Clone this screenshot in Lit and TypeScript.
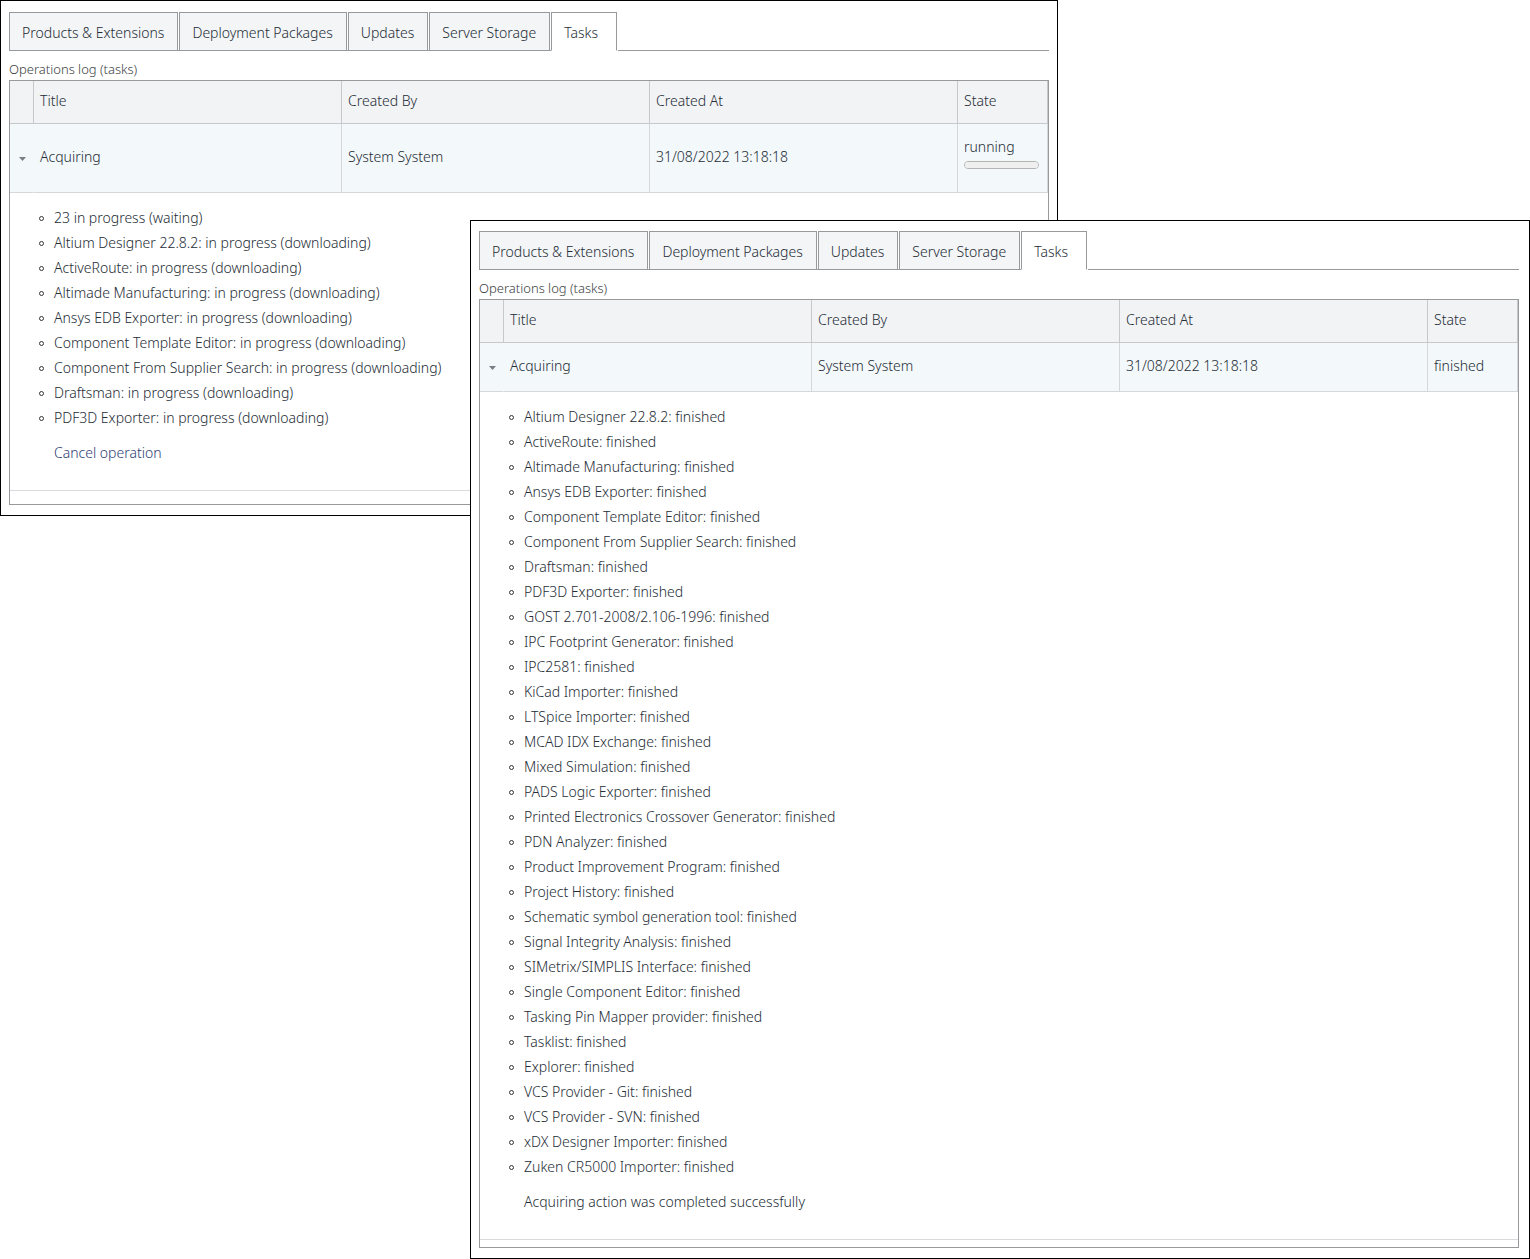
import { LitElement, html, css } from "lit";
import { customElement, property } from "lit/decorators.js";
import { classMap } from "lit/directives/class-map.js";

interface Task {
  title: string;
  createdBy: string;
  createdAt: string;
  state: string;
  items: string[];
  message?: string;
  action?: string;
}

const TABS = ["Products & Extensions", "Deployment Packages", "Updates", "Server Storage", "Tasks"];

const PRODUCTS = [
  "Altium Designer 22.8.2",
  "ActiveRoute",
  "Altimade Manufacturing",
  "Ansys EDB Exporter",
  "Component Template Editor",
  "Component From Supplier Search",
  "Draftsman",
  "PDF3D Exporter",
];

const EXTRA_PRODUCTS = [
  "GOST 2.701-2008/2.106-1996",
  "IPC Footprint Generator",
  "IPC2581",
  "KiCad Importer",
  "LTSpice Importer",
  "MCAD IDX Exchange",
  "Mixed Simulation",
  "PADS Logic Exporter",
  "Printed Electronics Crossover Generator",
  "PDN Analyzer",
  "Product Improvement Program",
  "Project History",
  "Schematic symbol generation tool",
  "Signal Integrity Analysis",
  "SIMetrix/SIMPLIS Interface",
  "Single Component Editor",
  "Tasking Pin Mapper provider",
  "Tasklist",
  "Explorer",
  "VCS Provider - Git",
  "VCS Provider - SVN",
  "xDX Designer Importer",
  "Zuken CR5000 Importer",
];

const RUNNING: Task = {
  title: "Acquiring",
  createdBy: "System System",
  createdAt: "31/08/2022 13:18:18",
  state: "running",
  items: ["23 in progress (waiting)", ...PRODUCTS.map((p) => `${p}: in progress (downloading)`)],
  action: "Cancel operation",
};

const FINISHED: Task = {
  title: "Acquiring",
  createdBy: "System System",
  createdAt: "31/08/2022 13:18:18",
  state: "finished",
  items: [...PRODUCTS, ...EXTRA_PRODUCTS].map((p) => `${p}: finished`),
  message: "Acquiring action was completed successfully",
};

@customElement("task-panel")
export class TaskPanel extends LitElement {
  @property({ attribute: false }) task!: Task;

  static styles = css`
    :host {
      display: block;
      box-sizing: border-box;
      border: 1px solid #000;
      background: #fff;
      color: #242c35;
      font: 300 14px/25px "Noto Sans", "Open Sans", sans-serif;
    }
    .tabs {
      display: flex;
      gap: 1px;
      background: linear-gradient(#97999d, #97999d) bottom / 100% 1px no-repeat;
    }
    .tab {
      box-sizing: border-box;
      height: 39px;
      padding: 2px 13px 0 12px;
      border: 1px solid #97999d;
      background: #f3f5f7;
      color: inherit;
      font: inherit;
      white-space: nowrap;
      cursor: pointer;
    }
    .tab.active {
      padding-right: 18px;
      border-bottom-color: #fff;
      background: #fff;
      box-shadow: 1px 0 #fff;
    }
    .heading {
      margin: 0;
      padding-top: 8px;
      color: #3c3e42;
      font: 300 13px/21px "Noto Sans", "Open Sans", sans-serif;
    }
    .box {
      border: 1px solid #97999d;
      padding-bottom: 13px;
    }
    .box.finished {
      padding-bottom: 7px;
    }
    .grid {
      width: 100%;
      table-layout: fixed;
      border-collapse: separate;
      border-spacing: 0;
    }
    .col-toggle {
      width: 24px;
    }
    .col-state {
      width: 90px;
    }
    .head,
    .cell {
      box-sizing: border-box;
      padding: 10px 6px 13px;
      border-right: 1px solid #d5d7da;
      border-bottom: 1px solid #d5d7da;
      background: #f3f8fb;
      font-weight: inherit;
      text-align: left;
      vertical-align: middle;
    }
    .head {
      padding: 7px 6px 10px;
      border-color: #c6c8cc;
      background: #f2f3f5;
    }
    .cell.toggle {
      padding: 0;
      border-right-color: transparent;
    }
    .caret {
      display: flex;
      align-items: center;
      justify-content: center;
      width: 100%;
      height: 24px;
      padding: 2px 0 0 2px;
      border: 0;
      background: none;
      cursor: pointer;
    }
    .progress {
      display: block;
      box-sizing: border-box;
      width: 75px;
      height: 8px;
      margin: 2px 0 10px;
      border: 1px solid #b4b4b4;
      border-radius: 4px;
      background: #efefef;
      appearance: none;
      overflow: hidden;
    }
    .progress::-webkit-progress-bar {
      background: #efefef;
    }
    .details {
      padding: 12px 29px 25px;
      border-bottom: 1px solid #d9dadc;
    }
    .list {
      margin: 0;
      padding: 0;
      list-style: none;
    }
    .item {
      display: flex;
      align-items: center;
      gap: 10px;
    }
    .item::before {
      content: "";
      box-sizing: border-box;
      width: 5px;
      height: 5px;
      margin-top: 2px;
      border: 1px solid #333;
      border-radius: 50%;
    }
    .note {
      margin: 10px 0 0 15px;
    }
    .link {
      color: #2d3c74;
      text-decoration: none;
    }
  `;

  render() {
    const t = this.task;
    return html`
      <div class="tabs" role="tablist">
        ${TABS.map(
          (label) => html`<button
            class=${classMap({ tab: true, active: label === "Tasks" })}
            role="tab"
            aria-selected=${label === "Tasks" ? "true" : "false"}
          >${label}</button>`,
        )}
      </div>
      <h2 class="heading" id="heading">Operations log (tasks)</h2>
      <div class=${classMap({ box: true, finished: t.state === "finished" })}>
        <table class="grid" aria-labelledby="heading">
          <colgroup>
            <col class="col-toggle" />
            <col />
            <col />
            <col />
            <col class="col-state" />
          </colgroup>
          <thead>
            <tr>
              <th class="head"></th>
              <th class="head" scope="col">Title</th>
              <th class="head" scope="col">Created By</th>
              <th class="head" scope="col">Created At</th>
              <th class="head" scope="col">State</th>
            </tr>
          </thead>
          <tbody>
            <tr>
              <td class="cell toggle">
                <button class="caret" aria-label="Toggle details" aria-expanded="true">
                  <svg width="7" height="4" viewBox="0 0 7 4" aria-hidden="true">
                    <path d="M0 0h7L3.5 4z" fill="#787e84" />
                  </svg>
                </button>
              </td>
              <td class="cell">${t.title}</td>
              <td class="cell">${t.createdBy}</td>
              <td class="cell">${t.createdAt}</td>
              <td class="cell">
                ${t.state}
                ${t.state === "running"
                  ? html`<progress class="progress" value="0" max="100" aria-label="Progress"></progress>`
                  : null}
              </td>
            </tr>
            <tr>
              <td class="details" colspan="5">
                <ul class="list">
                  ${t.items.map((i) => html`<li class="item">${i}</li>`)}
                </ul>
                <div class="note">
                  ${t.action ? html`<a class="link" href="#cancel">${t.action}</a>` : t.message}
                </div>
              </td>
            </tr>
          </tbody>
        </table>
      </div>
    `;
  }
}

@customElement("app-root")
export class AppRoot extends LitElement {
  static styles = css`
    :host {
      display: grid;
      grid-template-columns: 470fr 588fr 472fr;
      align-items: start;
      background: #fff;
    }
    .back,
    .front {
      grid-row: 1;
      min-width: 0;
    }
    .back {
      grid-column: 1 / 3;
      padding: 11px 8px 10px;
    }
    .front {
      grid-column: 2 / 4;
      margin-top: 220px;
      padding: 10px 10px 10px 8px;
    }
  `;

  render() {
    return html`
      <task-panel class="back" .task=${RUNNING}></task-panel>
      <task-panel class="front" .task=${FINISHED}></task-panel>
    `;
  }
}
